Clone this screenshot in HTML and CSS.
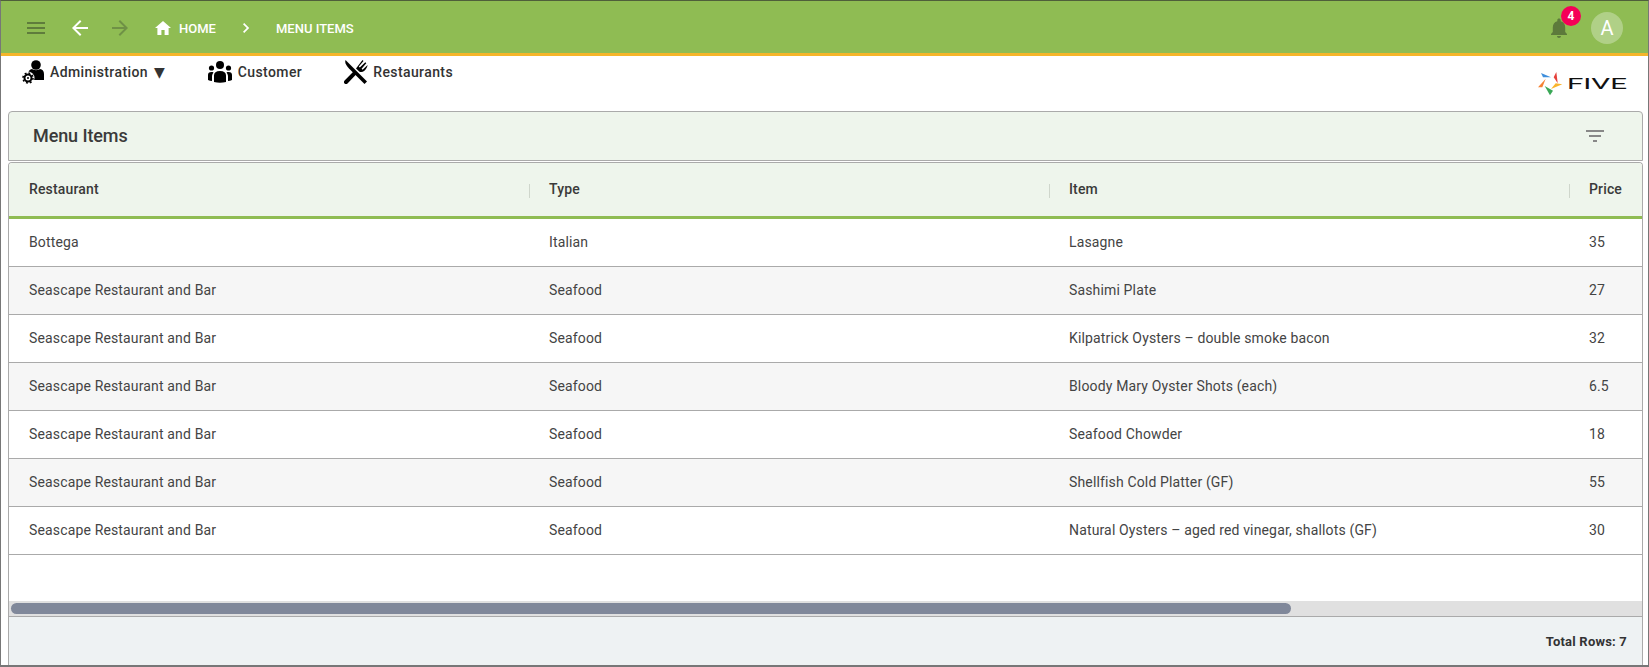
FILE: index.html
```html
<!DOCTYPE html>
<html lang="en">
<head>
<meta charset="utf-8">
<title>Menu Items</title>
<link rel="stylesheet" href="styles.css">
</head>
<body>
<div class="app">
  <header class="topbar">
    <svg class="ico-menu" viewBox="0 0 18 12"><path d="M0 0h18v2H0zM0 5h18v2H0zM0 10h18v2H0z"/></svg>
    <svg class="ico-back" viewBox="0 0 16 16"><path d="M16 7H3.800l5.600-5.600L8 0 0 8l8 8 1.400-1.400L3.800 9H16z"/></svg>
    <svg class="ico-forward" viewBox="0 0 16 16"><path d="M0 7h12.200L6.600 1.400 8 0l8 8-8 8-1.400-1.400L12.200 9H0z"/></svg>
    <svg class="ico-home" viewBox="0 0 16 14"><path d="M6.400 14V9h3.200v5h4V7H16L8 0 0 7h2.400v7z"/></svg>
    <span class="crumb crumb-home">HOME</span>
    <svg class="ico-chevron" viewBox="0 0 7 10"><path d="M1.200 0 0 1.200 3.800 5 0 8.800 1.200 10l5-5z"/></svg>
    <span class="crumb crumb-current">MENU ITEMS</span>
    <div class="bell-wrap">
      <svg class="ico-bell" viewBox="0 0 16 20"><path d="M8 20c1.100 0 2-.9 2-2H6c0 1.100.9 2 2 2zm6.200-6V9.500c0-3-1.500-5.500-4.500-6.200V2.200C9.700 1.200 9 .5 8 .5s-1.700.7-1.700 1.700v1.100c-3 .7-4.500 3.200-4.500 6.200V14L0 16v1h16v-1z"/></svg>
      <span class="badge">4</span>
    </div>
    <div class="avatar">A</div>
  </header>

  <nav class="menubar">
    <div class="menu-items">
      <a class="menu-item menu-admin">
        <svg class="ico-admin" viewBox="0 0 22 24">
          <circle cx="14" cy="5" r="4.800"/>
          <path d="M6 19v-5c0-3 2-4.500 4-5 2 1.500 6 1.500 8 0 2.500.5 4 2 4 5v6H8z"/>
          <circle cx="6" cy="18" r="6.500" fill="#fff"/>
          <circle cx="6" cy="18" r="3.500" fill="none" stroke="#000" stroke-width="2"/>
          <circle cx="6" cy="18" r="5" fill="none" stroke="#000" stroke-width="1.600" stroke-dasharray="1.900 2"/>
          <circle cx="6" cy="18" r="1"/>
        </svg>
        <span>Administration</span>
        <span class="caret">▼</span>
      </a>
      <a class="menu-item menu-customer">
        <svg class="ico-customer" viewBox="0 0 24 22">
          <circle cx="12" cy="4" r="4"/><circle cx="3.500" cy="7" r="2.600"/><circle cx="20.500" cy="7" r="2.600"/>
          <path d="M6 21v-6.500C6 11.500 8 10 12 10s6 1.500 6 4.500V21q-6 1.500-12 0zM0 19v-5c0-2 1-3 3.500-3 .8 0 1.400.1 2 .4C4.500 12.500 4 14 4 15.500V20q-2-.2-4-1zM24 19v-5c0-2-1-3-3.500-3-.8 0-1.400.1-2 .4 1 1.100 1.500 2.600 1.500 4.100V20q2-.2 4-1z"/>
        </svg>
        <span>Customer</span>
      </a>
      <a class="menu-item menu-restaurants">
        <svg class="ico-cutlery" viewBox="0 0 24 24">
          <path d="M1.500 0 23 21.500 20.500 24 9.500 13 6 9.500C2.500 6 .5 3 1.500 0z"/>
          <path d="M9.500 11.500 12.300 14.300 3.500 23.500a1.900 1.900 0 0 1-2.900-2.900z"/>
          <path d="M13 9.500 19.500 1l1 1-4.700 5.500 1 1L22.300 3.200l1 1-4.700 5.500 1 1 5-4.700c-.2 2.200-1.500 4.200-3.200 5.700-1.500 1.300-3.200 1.600-4.900 1z" transform="translate(-1 -1)"/>
        </svg>
        <span>Restaurants</span>
      </a>
    </div>
    <div class="logo">
      <svg class="logo-mark" viewBox="0 0 25 24">
        <path fill="#3f8fdc" d="M3 1l10 4.300H5z"/>
        <path fill="#e5403a" d="M18.300 0l1.400 11.300-4-6z"/>
        <path fill="#f9b42d" d="M24.300 12.300 13 17l4.700-5.700z"/>
        <path fill="#3aa857" d="M12 23.300 6.700 14 15 18.700z"/>
        <path fill="#f58233" d="M0 15.300 7.700 6.700 4.300 15.300z"/>
      </svg>
      <svg class="logo-word" viewBox="0 0 60 16"><text x="0" y="13" textLength="60" lengthAdjust="spacingAndGlyphs" class="logo-text">FIVE</text></svg>
    </div>
  </nav>

  <section class="title-panel">
    <h1 class="title">Menu Items</h1>
    <svg class="ico-filter" viewBox="0 0 18 12"><path d="M0 0h18v2H0zM3 5h12v2H3zM7 10h4v2H7z"/></svg>
  </section>

  <section class="grid-panel">
    <div class="grid-head">
      <div class="cell">Restaurant</div>
      <div class="cell">Type</div>
      <div class="cell">Item</div>
      <div class="cell">Price</div>
    </div>
    <div class="grid-body">
      <div class="row"><div class="cell">Bottega</div><div class="cell">Italian</div><div class="cell">Lasagne</div><div class="cell">35</div></div>
      <div class="row alt"><div class="cell">Seascape Restaurant and Bar</div><div class="cell">Seafood</div><div class="cell">Sashimi Plate</div><div class="cell">27</div></div>
      <div class="row"><div class="cell">Seascape Restaurant and Bar</div><div class="cell">Seafood</div><div class="cell">Kilpatrick Oysters – double smoke bacon</div><div class="cell">32</div></div>
      <div class="row alt"><div class="cell">Seascape Restaurant and Bar</div><div class="cell">Seafood</div><div class="cell">Bloody Mary Oyster Shots (each)</div><div class="cell">6.5</div></div>
      <div class="row"><div class="cell">Seascape Restaurant and Bar</div><div class="cell">Seafood</div><div class="cell">Seafood Chowder</div><div class="cell">18</div></div>
      <div class="row alt"><div class="cell">Seascape Restaurant and Bar</div><div class="cell">Seafood</div><div class="cell">Shellfish Cold Platter (GF)</div><div class="cell">55</div></div>
      <div class="row"><div class="cell">Seascape Restaurant and Bar</div><div class="cell">Seafood</div><div class="cell">Natural Oysters – aged red vinegar, shallots (GF)</div><div class="cell">30</div></div>
    </div>
    <div class="scroll-track"><div class="scroll-thumb"></div></div>
    <footer class="grid-foot">Total Rows: 7</footer>
  </section>
</div>
</body>
</html>
```
FILE: styles.css
```css
* { box-sizing: border-box; }
html, body { margin: 0; padding: 0; }
body {
  width: 1649px;
  height: 667px;
  overflow: hidden;
  background: #fff;
  font-family: Roboto, "Liberation Sans", sans-serif;
  color: #333;
}
.app {
  width: 1649px;
  height: 667px;
  display: flex;
  flex-direction: column;
  border: 1px solid #777;
  border-top-color: #4f5f3a;
  border-bottom-width: 2px;
  overflow: hidden;
}

/* top bar */
.topbar {
  flex: none;
  height: 55px;
  padding-top: 2px;
  display: flex;
  align-items: center;
  background: #8fbc53;
  border-bottom: 3px solid #f5b52a;
}
.topbar svg { display: block; flex: none; }
.ico-menu { width: 18px; height: 12px; margin-left: 26px; fill: #5f7c3c; }
.ico-back { width: 16px; height: 16px; margin-left: 27px; fill: #fff; }
.ico-forward { width: 16px; height: 16px; margin-left: 24px; fill: #6f9146; }
.ico-home { width: 16px; height: 14px; margin-left: 27px; fill: #fff; }
.crumb { font-size: 13px; font-weight: 500; color: #fff; white-space: nowrap; }
.crumb-home { margin-left: 8px; width: 37px; }
.ico-chevron { width: 7px; height: 10px; margin-left: 27px; fill: #fff; }
.crumb-current { margin-left: 26px; }
.bell-wrap { position: relative; margin-left: auto; width: 16px; height: 20px; }
.ico-bell { width: 16px; height: 20px; fill: #5d7a3b; }
.badge {
  position: absolute;
  left: 10px;
  top: -12px;
  width: 20px;
  height: 20px;
  border-radius: 50%;
  background: #f50057;
  color: #fff;
  font-size: 12px;
  font-weight: 700;
  line-height: 20px;
  text-align: center;
}
.avatar {
  width: 32px;
  height: 32px;
  margin: 0 25px 0 24px;
  border-radius: 50%;
  background: rgba(255, 255, 255, 0.3);
  color: #fff;
  font-size: 20px;
  line-height: 32px;
  text-align: center;
}

/* navigation row */
.menubar {
  flex: none;
  height: 55px;
  display: flex;
  justify-content: space-between;
}
.menu-items { display: flex; align-items: flex-start; padding-top: 3px; padding-left: 21px; }
.menu-item {
  display: flex;
  align-items: center;
  height: 26px;
  font-size: 14px;
  font-weight: 500;
  letter-spacing: 0.4px;
  color: #333;
  white-space: nowrap;
}
.menu-item svg { display: block; flex: none; }
.ico-admin { width: 22px; height: 24px; margin-right: 6px; }
.ico-customer { width: 24px; height: 22px; margin-right: 6px; }
.ico-cutlery { width: 24px; height: 24px; margin-right: 5px; }
.caret { margin-left: 6px; font-family: "DejaVu Sans", sans-serif; font-size: 14px; letter-spacing: 0; }
.menu-customer { margin-left: 43px; }
.menu-restaurants { margin-left: 42px; }
.logo { display: flex; align-items: center; gap: 4px; padding: 16px 21px 0 0; height: 40px; }
.logo-mark { width: 25px; height: 24px; display: block; }
.logo-word { width: 60px; height: 16px; display: block; }
.logo-text { font-family: Roboto, sans-serif; font-size: 14px; font-weight: 400; fill: #111; }

/* panels */
.title-panel {
  flex: none;
  height: 50px;
  margin: 0 5px 1px 7px;
  display: flex;
  align-items: center;
  justify-content: space-between;
  padding: 0 38px 0 24px;
  background: #eef5ec;
  border: 1px solid #aaa;
  border-radius: 4px 4px 0 0;
}
.title { margin: 0; font-size: 18px; font-weight: 500; letter-spacing: -0.1px; color: #3a3a3a; line-height: 1; }
.ico-filter { width: 18px; height: 12px; fill: #888; display: block; }

.grid-panel {
  flex: 1;
  min-height: 0;
  margin: 0 5px 0 7px;
  display: flex;
  flex-direction: column;
  border: 1px solid #aaa;
  border-bottom: none;
  border-radius: 4px 4px 0 0;
  overflow: hidden;
}
.grid-head, .row {
  display: grid;
  grid-template-columns: repeat(3, 520px) 120px;
  flex: none;
  letter-spacing: 0.15px;
}
.grid-head {
  height: 56px;
  padding-bottom: 2px;
  align-items: center;
  background: #eef5ec;
  border-bottom: 3px solid #8fbc53;
  font-size: 14px;
  font-weight: 500;
  color: #3a3a3a;
}
.grid-head .cell { position: relative; }
.grid-head .cell + .cell::before {
  content: "";
  position: absolute;
  left: 0;
  top: 3px;
  width: 1px;
  height: 14px;
  background: #cfd6cc;
}
.cell { padding-left: 20px; white-space: nowrap; }
.grid-body { flex: 1; min-height: 0; font-size: 14px; color: #444; }
.row {
  height: 48px;
  padding-bottom: 2px;
  align-items: center;
  border-bottom: 1px solid #aaa;
  background: #fff;
}
.alt { background: #f6f6f6; }
.scroll-track {
  flex: none;
  height: 16px;
  padding: 2px 2px;
  background: #e0e0e0;
  border-bottom: 1px solid #aaa;
}
.scroll-thumb { width: 1280px; height: 11px; border-radius: 6px; background: #80889a; }
.grid-foot {
  flex: none;
  height: 48px;
  display: flex;
  align-items: center;
  justify-content: flex-end;
  padding-right: 15px;
  background: #eef2f3;
  font-size: 13px;
  font-weight: 700;
  letter-spacing: 0.2px;
  color: #333;
}
```
